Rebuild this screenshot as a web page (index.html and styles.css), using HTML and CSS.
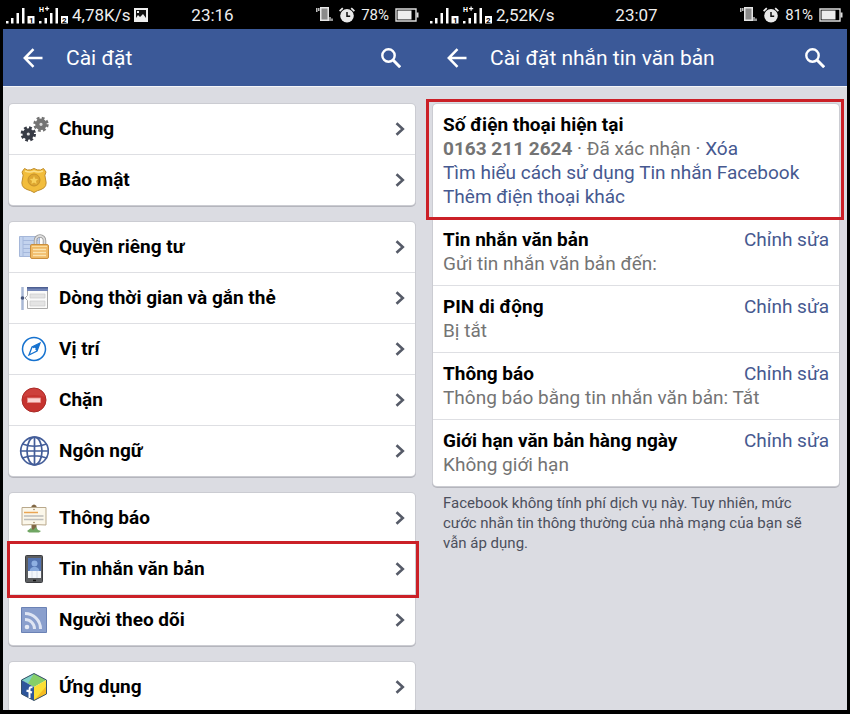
FILE: index.html
```html
<!DOCTYPE html>
<html lang="vi">
<head>
    <meta charset="UTF-8">
    <meta name="viewport" content="width=device-width, initial-scale=1.0">
    <title>Cài đặt</title>
    <link rel="stylesheet" href="styles.css">
</head>
<body>
    <!-- shared shapes -->
    <svg class="shapes" aria-hidden="true">
        <symbol id="signal" viewBox="0 0 62 18">
            <g fill="#fff">
                <path d="M0 15h2.500v2.500H0zM5 12h2.500v5.500H5zM10.500 7h2.500v10.500h-2.500zM16 2h2.500v15.500H16z"/>
                <path d="M33 15h2.500v2.500H33zM38.500 12H41v5.500h-2.500zM44 7h2.500v10.500H44zM49.500 2H52v15.500h-2.500z"/>
                <rect x="21.500" y="10" width="7" height="7.500"/>
                <rect x="55" y="10" width="7" height="7.500"/>
                <text x="33" y="6" font-size="7" font-weight="700">H</text>
                <path d="M39 2h1.500V.5h1.200V2h1.500v1.200h-1.500v1.500h-1.200V3.200H39z"/>
            </g>
            <g font-size="8" font-weight="700" fill="#000">
                <text x="23" y="17">1</text>
                <text x="56" y="17">2</text>
            </g>
        </symbol>
        <symbol id="vibrate" viewBox="0 0 17 15">
            <path d="M4 0h9v14H4z" fill="#e6e6e6"/>
            <path d="M5.500 1.500h6v11h-6z" fill="#8b8b8b"/>
            <path d="M.8 1v4M2.800 1v3M14 10v4M16 11.500V14" stroke="#ddd" stroke-width="1.300" fill="none"/>
        </symbol>
        <symbol id="alarm" viewBox="0 0 16 16">
            <circle cx="8" cy="8.800" r="6.800" fill="#e9e9e9"/>
            <path d="M8 5v4.200h3.200" fill="none" stroke="#111" stroke-width="1.500"/>
            <path d="M.6 4.200l3.200-3M15.400 4.200l-3.200-3" stroke="#e9e9e9" stroke-width="1.800"/>
        </symbol>
        <symbol id="battery" viewBox="0 0 24 14">
            <path d="M1 1h20v12H1z" fill="none" stroke="#ddd" stroke-width="1.400"/>
            <path d="M2.500 2.500h14v9h-14z" fill="#eee"/>
            <path d="M21.500 4.500h2v5h-2z" fill="#ddd"/>
        </symbol>
        <symbol id="back" viewBox="0 0 20 20">
            <path d="M19.500 10H2M10.500 1.200L1.800 10l8.700 8.800" fill="none" stroke="#fff" stroke-width="2.500"/>
        </symbol>
        <symbol id="search" viewBox="0 0 20 20">
            <circle cx="7.500" cy="7.500" r="6.200" fill="none" stroke="#fff" stroke-width="2.400"/>
            <path d="M12 12l7.200 7.200" stroke="#fff" stroke-width="3"/>
        </symbol>
        <symbol id="chevron" viewBox="0 0 10 14">
            <path d="M1.500 1.200L7.800 7l-6.300 5.800" fill="none" stroke="#565b68" stroke-width="2.600"/>
        </symbol>
    </svg>

    <div class="phones">
        <main class="phone">
            <div class="status">
                <div class="status-side">
                    <svg class="signal"><use href="#signal"/></svg>
                    <span>4,78K/s</span>
                    <svg class="picture" viewBox="0 0 14 14"><path d="M0 0h14v14H0z" fill="#eee"/><path d="M2 2h10v8l-3-4-3 3-2-2-2 3z" fill="#111"/><path d="M3 3h2v2H3z" fill="#eee"/></svg>
                </div>
                <span>23:16</span>
                <div class="status-side status-right">
                    <svg class="vibrate"><use href="#vibrate"/></svg>
                    <svg class="alarm"><use href="#alarm"/></svg>
                    <span class="percent">78%</span>
                    <svg class="battery"><use href="#battery"/></svg>
                </div>
            </div>
            <header class="navbar">
                <button type="button" aria-label="Quay lại"><svg><use href="#back"/></svg></button>
                <h1>Cài đặt</h1>
                <button type="button" aria-label="Tìm kiếm"><svg><use href="#search"/></svg></button>
            </header>

            <nav class="content">
                <ul class="card">
                    <li><a class="row" href="#">
                        <svg class="icon" viewBox="0 0 30 30">
                            <circle cx="22" cy="10.300" r="6.300" fill="none" stroke="#747474" stroke-width="2.800" stroke-dasharray="2.700 2.250"/>
                            <circle cx="22" cy="10.300" r="3.700" fill="#ddd" stroke="#747474" stroke-width="4.200"/>
                            <circle cx="9.300" cy="20" r="6.300" fill="none" stroke="#373b45" stroke-width="2.800" stroke-dasharray="2.700 2.250"/>
                            <circle cx="9.300" cy="20" r="3.700" fill="#ddd" stroke="#373b45" stroke-width="4.200"/>
                        </svg>
                        <span>Chung</span><svg class="chevron"><use href="#chevron"/></svg>
                    </a></li>
                    <li><a class="row" href="#">
                        <svg class="icon" viewBox="0 0 30 30">
                            <path d="M5.500 3.500l3 1.500q3 .5 6.500-1.500 3.500 2 6.500 1.500l3-1.500 2.500 3.500q-2 3-.5 7 2.500 8-4.500 10.500-4 1-7 3-3-2-7-3Q1 22 3.500 14q1.500-4-.5-7z" fill="#f2bd3c" stroke="#c08d2b"/>
                            <path d="M6 6q5 2 9 0 4 2 9 0" fill="none" stroke="#fbe08a" stroke-width="1.500"/>
                            <circle cx="15" cy="15" r="6" fill="#dda630" stroke="#c7922b"/>
                            <path d="M15 11l1.200 2.700 3 .3-2.200 2 .6 3-2.600-1.500-2.600 1.500.6-3-2.200-2 3-.3z" fill="#f8d15c"/>
                        </svg>
                        <span>Bảo mật</span><svg class="chevron"><use href="#chevron"/></svg>
                    </a></li>
                </ul>

                <ul class="card">
                    <li><a class="row" href="#">
                        <svg class="icon" viewBox="0 0 30 30">
                            <path d="M.5 4.500h20v20H.5z" fill="#c3d3ee" stroke="#a5b7d9"/>
                            <path d="M4 5v20M4 8.500h15M4 12.500h8M4 16.500h7M4 20.500h7" stroke="#a5b8dc"/>
                            <path d="M16.500 14V8.500a4.500 4.500 0 0 1 9 0V14" fill="none" stroke="#999" stroke-width="3.500"/>
                            <path d="M16.500 14V8.500a4.500 4.500 0 0 1 9 0V14" fill="none" stroke="#ddd" stroke-width="1.800"/>
                            <rect x="11.500" y="12.500" width="18" height="14" rx="1.500" fill="#efb965" stroke="#c98e3d"/>
                            <path d="M13 14.500h15" stroke="#fbdc9b"/>
                            <path d="M14 17.500h13M14 20.500h13M14 23.500h13" stroke="#fbe4b0" stroke-width="1.300"/>
                        </svg>
                        <span>Quyền riêng tư</span><svg class="chevron"><use href="#chevron"/></svg>
                    </a></li>
                    <li><a class="row" href="#">
                        <svg class="icon" viewBox="0 0 30 30">
                            <path d="M3.500 4v23" stroke="#a9b8d5" stroke-width="2.500"/>
                            <circle cx="3.500" cy="15" r="1.800" fill="#45547b"/>
                            <path d="M8.500 4.500h20v21h-20v-8L6 15l2.500-2.500z" fill="#fbfbfa" stroke="#aaa"/>
                            <path d="M8 4h21v4H8z" fill="#7587b8"/>
                            <path d="M8 4h21v1.500H8z" fill="#4d5f92"/>
                            <path d="M11 11h15v4H11zM11 18h15v5H11z" fill="#e4e4e4" stroke="#ccc" stroke-width=".7"/>
                        </svg>
                        <span>Dòng thời gian và gắn thẻ</span><svg class="chevron"><use href="#chevron"/></svg>
                    </a></li>
                    <li><a class="row" href="#">
                        <svg class="icon" viewBox="0 0 30 30">
                            <circle cx="15" cy="15" r="11.500" fill="#fff" stroke="#1672cf" stroke-width="1.500"/>
                            <path d="M21 9l-3 8-8 4 3-8z" fill="#fff" stroke="#1672cf" stroke-width="1.300"/>
                            <path d="M21 9l-8 4 5 4z" fill="#1672cf"/>
                            <circle cx="15.500" cy="14.800" r="1.100" fill="#fff"/>
                        </svg>
                        <span>Vị trí</span><svg class="chevron"><use href="#chevron"/></svg>
                    </a></li>
                    <li><a class="row" href="#">
                        <svg class="icon" viewBox="0 0 30 30">
                            <circle cx="15" cy="15" r="12" fill="#c6332f" stroke="#a92b28"/>
                            <path d="M4 12a11.500 11.500 0 0 1 22 0q-11-4-22 0z" fill="#cd403c"/>
                            <rect x="8.500" y="13" width="13" height="4.500" fill="#fbd4d2" stroke="#e68c88" stroke-width=".8"/>
                        </svg>
                        <span>Chặn</span><svg class="chevron"><use href="#chevron"/></svg>
                    </a></li>
                    <li><a class="row" href="#">
                        <svg class="icon" viewBox="0 0 30 30">
                            <g fill="none" stroke="#435d99" stroke-width="1.700">
                                <circle cx="15.500" cy="15" r="13.800"/>
                                <ellipse cx="15.500" cy="15" rx="7.500" ry="13.800"/>
                                <path d="M15.500 1v28M1.500 15h28M3.500 8q12 4.500 24 0M3.500 22q12-4.500 24 0"/>
                            </g>
                        </svg>
                        <span>Ngôn ngữ</span><svg class="chevron"><use href="#chevron"/></svg>
                    </a></li>
                </ul>

                <ul class="card">
                    <li><a class="row" href="#">
                        <svg class="icon" viewBox="0 0 30 30">
                            <path d="M12.500 3q2.500-3 5 0v24h-5z" fill="#806744"/>
                            <path d="M8 28l4-3 2 2 3-3 2 3 3 1-2 1.500H10z" fill="#70a663"/>
                            <path d="M3 4.500h24v17.500l-12-.5-12 .5z" fill="#fbf7ea" stroke="#b9a98c"/>
                            <path d="M5 9.500h14" stroke="#e9a554" stroke-width="1.500"/>
                            <path d="M5 13h19.500M5 16.500h19.500" stroke="#bdbdba" stroke-width="1.300"/>
                            <circle cx="15" cy="6.500" r=".8" fill="#9a8462"/>
                            <circle cx="15" cy="19.500" r=".8" fill="#9a8462"/>
                        </svg>
                        <span>Thông báo</span><svg class="chevron"><use href="#chevron"/></svg>
                    </a></li>
                    <li class="marked"><a class="row" href="#">
                        <svg class="icon" viewBox="0 0 30 30">
                            <rect x="6.500" y="1.500" width="17" height="27" rx="1" fill="#5b5d60" stroke="#3c3e42"/>
                            <path d="M9 4h13v20H9z" fill="#5373b0"/>
                            <circle cx="15.500" cy="9.500" r="3" fill="#8fb0e2"/>
                            <path d="M10.500 18q0-4 3.500-5h3q3.500 1 3.500 5z" fill="#87a9dd"/>
                            <path d="M9 17h13v7H9z" fill="#f3f6fa"/>
                            <path d="M13 17v7M18 17v7" stroke="#d4dce8"/>
                            <path d="M14 26.500h3" stroke="#111" stroke-width="1.500"/>
                        </svg>
                        <span>Tin nhắn văn bản</span><svg class="chevron"><use href="#chevron"/></svg>
                    </a></li>
                    <li><a class="row" href="#">
                        <svg class="icon" viewBox="0 0 30 30">
                            <path d="M2.500 2.500h25v25h-25z" fill="#8a9fcd" stroke="#6b82b5"/>
                            <circle cx="8" cy="22" r="2.300" fill="#e5eaf5"/>
                            <path d="M6 14.500a9.500 9.500 0 0 1 9.500 9.500M6 8.500a15.500 15.500 0 0 1 15.500 15.500" fill="none" stroke="#dfe5f3" stroke-width="3"/>
                        </svg>
                        <span>Người theo dõi</span><svg class="chevron"><use href="#chevron"/></svg>
                    </a></li>
                </ul>

                <ul class="card card-open">
                    <li><a class="row" href="#">
                        <svg class="icon" viewBox="0 0 30 30">
                            <path d="M15 1.500L2.500 8 15 15l12.500-7z" fill="#86cf68"/>
                            <path d="M15 1.500L2.500 8l6.500 3.500z" fill="#7fd1c5"/>
                            <path d="M2.500 8L15 15v13.500L2.500 22z" fill="#2d559b"/>
                            <path d="M27.500 8v14L15 28.500V15z" fill="#fbdf36"/>
                            <path d="M27.500 14v8L15 28.500z" fill="#f5bc22"/>
                            <path d="M15 1.500L27.500 8v14L15 28.500 2.500 22V8z" fill="none" stroke="#35506b"/>
                            <path d="M13.500 15.500q-3-1.300-3 2V26M7.500 18.500l5.500 2" fill="none" stroke="#fff" stroke-width="2"/>
                        </svg>
                        <span>Ứng dụng</span><svg class="chevron"><use href="#chevron"/></svg>
                    </a></li>
                </ul>
            </nav>
        </main>

        <section class="phone">
            <div class="status">
                <div class="status-side">
                    <svg class="signal"><use href="#signal"/></svg>
                    <span>2,52K/s</span>
                </div>
                <span>23:07</span>
                <div class="status-side status-right">
                    <svg class="vibrate"><use href="#vibrate"/></svg>
                    <svg class="alarm"><use href="#alarm"/></svg>
                    <span class="percent">81%</span>
                    <svg class="battery"><use href="#battery"/></svg>
                </div>
            </div>
            <header class="navbar">
                <button type="button" aria-label="Quay lại"><svg><use href="#back"/></svg></button>
                <h1>Cài đặt nhắn tin văn bản</h1>
                <button type="button" aria-label="Tìm kiếm"><svg><use href="#search"/></svg></button>
            </header>

            <div class="content">
                <div class="card">
                    <div class="setting marked">
                        <h2>Số điện thoại hiện tại</h2>
                        <p><b>0163 211 2624</b> · Đã xác nhận · <a href="#">Xóa</a></p>
                        <p><a href="#">Tìm hiểu cách sử dụng Tin nhắn Facebook</a></p>
                        <p><a href="#">Thêm điện thoại khác</a></p>
                    </div>
                    <div class="setting">
                        <div class="setting-head"><h2>Tin nhắn văn bản</h2><a href="#">Chỉnh sửa</a></div>
                        <p>Gửi tin nhắn văn bản đến:</p>
                    </div>
                    <div class="setting">
                        <div class="setting-head"><h2>PIN di động</h2><a href="#">Chỉnh sửa</a></div>
                        <p>Bị tắt</p>
                    </div>
                    <div class="setting">
                        <div class="setting-head"><h2>Thông báo</h2><a href="#">Chỉnh sửa</a></div>
                        <p>Thông báo bằng tin nhắn văn bản: Tắt</p>
                    </div>
                    <div class="setting">
                        <div class="setting-head"><h2>Giới hạn văn bản hàng ngày</h2><a href="#">Chỉnh sửa</a></div>
                        <p>Không giới hạn</p>
                    </div>
                </div>
                <p class="note">Facebook không tính phí dịch vụ này. Tuy nhiên, mức cước nhắn tin thông thường của nhà mạng của bạn sẽ vẫn áp dụng.</p>
            </div>
        </section>
    </div>
</body>
</html>
```
FILE: styles.css
```css
* {
    box-sizing: border-box;
}
body {
    margin: 0;
    background: #000;
    font-family: Roboto, "Noto Sans", sans-serif;
    font-size: 19px;
    line-height: 24px;
}
h1, h2, p, ul {
    margin: 0;
    padding: 0;
}
ul {
    list-style: none;
}
a {
    color: #465990;
    text-decoration: none;
}
svg {
    flex: none;
}
.shapes {
    display: none;
}
.phones {
    display: grid;
    grid-template-columns: 1fr 1fr;
    height: 100vh;
    padding: 0 3px 4px;
}
.phone {
    --left: 6px;
    --right: 10px;
    display: flex;
    flex-direction: column;
    min-width: 0;
    min-height: 0;
    background: #dbdce2;
    overflow: hidden;
}
.phone + .phone {
    --left: 8px;
    --right: 8px;
}

/* status bar */
.status {
    display: grid;
    grid-template-columns: 1fr auto 1fr;
    align-items: center;
    flex: none;
    height: 29px;
    padding: 0 calc(var(--right) - 4px) 0 calc(var(--left) - 3px);
    background: #000;
    color: #eee;
    font-size: 17px;
}
.status-side {
    display: flex;
    align-items: center;
    gap: 4px;
}
.status-right {
    justify-content: flex-end;
    gap: 6px;
}
.percent {
    font-size: 15px;
}
.signal {
    width: 62px;
    height: 18px;
}
.picture {
    width: 14px;
    height: 14px;
}
.vibrate {
    width: 17px;
    height: 15px;
}
.alarm {
    width: 16px;
    height: 16px;
}
.battery {
    width: 24px;
    height: 14px;
}

/* blue bar */
.navbar {
    display: flex;
    align-items: center;
    flex: none;
    height: 58px;
    padding: 0 calc(var(--right) + 4px) 0 calc(var(--left) + 4px);
    background: #3b5998;
    border-bottom: 1px solid #f4f5f8;
    color: #fff;
}
.navbar h1 {
    flex: 1;
    padding-left: 13px;
    font-size: 21px;
    font-weight: 400;
}
.navbar button {
    display: flex;
    padding: 10px;
    border: 0;
    background: none;
}
.navbar svg {
    width: 20px;
    height: 20px;
}

.content {
    display: flex;
    flex-direction: column;
    flex: 1;
    gap: 17px;
    padding: 17px var(--right) 0 var(--left);
}
.card {
    background: #fff;
    border-radius: 4px;
    box-shadow: 0 0 0 1px #cbccd2, 0 1px 0 1px #b4b5bc;
}
.card-open {
    flex: 1;
}

/* left list */
.card li + li,
.setting + .setting {
    border-top: 1px solid #dedfe3;
}
.row {
    display: flex;
    align-items: center;
    gap: 10px;
    height: 50px;
    padding: 0 10px;
    color: #000;
    font-weight: 700;
}
.row span {
    flex: 1;
}
.icon {
    width: 30px;
    height: 30px;
}
.chevron {
    width: 10px;
    height: 14px;
}

/* right list */
.setting {
    padding: 9px 10px;
    color: #747474;
}
.setting h2 {
    color: #000;
    font-size: 19px;
    font-weight: 700;
}
.setting-head {
    display: flex;
    justify-content: space-between;
}
.note {
    margin-top: -10px;
    padding: 0 20px 0 10px;
    color: #4b4f5c;
    font-size: 15px;
    line-height: 20px;
}

/* red frame round the item to tap */
.marked {
    position: relative;
}
.marked::after {
    content: "";
    position: absolute;
    inset: -3px -4px -4px -2px;
    border: 3px solid #cb2027;
    pointer-events: none;
}
.setting.marked::after {
    inset: -5px -5px -2px -7px;
}
```
